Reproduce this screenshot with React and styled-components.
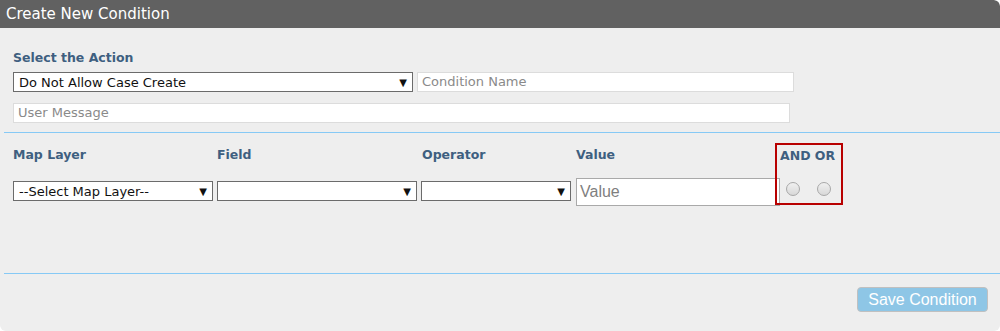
import React from 'react';
import styled, { createGlobalStyle } from 'styled-components';

const GlobalStyle = createGlobalStyle`
    html, body {
        margin: 0;
        padding: 0;
        background: #fff;
    }
`;

const Panel = styled.div`
    width: 1000px;
    height: 331px;
    background-color: #eeeeee;
    border-radius: 0 6px 6px 6px;
    font-family: "DejaVu Sans", Verdana, sans-serif;
    overflow: hidden;
    display: flex;
    flex-direction: column;
    text-align: left;
`;

const Header = styled.div`
    height: 28px;
    background-color: #616161;
    color: #fff;
    font-size: 15px;
    line-height: 29px;
    padding-left: 6px;
    border-radius: 0 6px 0 0;
`;

const Section = styled.div`
    padding: ${p => p.$pad || '0 0 0 13px'};
    display: flex;
    flex-direction: column;
`;

const Label = styled.div`
    color: #3e5f80;
    font-weight: bold;
    font-size: 12.5px;
    line-height: 15px;
    width: ${p => p.$w || 'auto'};
    flex: none;
`;

const Row = styled.div`
    display: flex;
    align-items: ${p => p.$align || 'center'};
    gap: ${p => p.$gap || '4px'};
    margin-top: ${p => p.$mt || '0'};
`;

const SelectBox = styled.div`
    box-sizing: border-box;
    width: ${p => p.$w};
    height: 20px;
    margin-top: ${p => p.$mt || '0'};
    margin-right: ${p => p.$mr || '0'};
    background: #fff;
    border: 1px solid #6b6b6b;
    display: flex;
    align-items: center;
    justify-content: space-between;
    padding: 0 5px 0 5px;
    font-size: 13px;
    color: #111;
    flex: none;

    span.arrow {
        font-size: 10px;
        color: #111;
    }
`;

const TextInput = styled.div`
    box-sizing: border-box;
    width: ${p => p.$w};
    height: 20px;
    background: #fff;
    border: 1px solid #dcdcdc;
    padding-left: 4px;
    font-size: 13px;
    line-height: 18px;
    color: #8a8a8a;
    flex: none;
`;

const Divider = styled.div`
    height: 1px;
    background: #86c9f5;
    margin: ${p => p.$m || '0'};
`;

const ValueInput = styled.div`
    box-sizing: border-box;
    width: 204px;
    height: 28px;
    background: #fff;
    border: 1px solid #a9a9a9;
    padding-left: 3px;
    font-family: "Liberation Sans", Arial, sans-serif;
    font-size: 16px;
    line-height: 26px;
    color: #7f7f7f;
    flex: none;
`;

const LogicBox = styled.div`
    box-sizing: border-box;
    width: 68px;
    height: 62px;
    border: 2px solid #b80000;
    margin-left: -5px;
    margin-top: -35px;
    padding: 3px 0 0 3px;
    display: flex;
    flex-direction: column;
    flex: none;
`;

const Radios = styled.div`
    display: flex;
    gap: 17px;
    margin: 19px 0 0 6px;
`;

const Radio = styled.div`
    width: 14px;
    height: 14px;
    border-radius: 50%;
    border: 1px solid #a8a8a8;
    background: linear-gradient(#f0f0f0, #d8d8d8);
    box-sizing: border-box;
`;

const Footer = styled.div`
    display: flex;
    justify-content: flex-end;
    padding: 13px 12px 0 0;
`;

const SaveButton = styled.button`
    width: 131px;
    height: 25px;
    background: #8ec6e6;
    border: 1px solid #c0c0c0;
    border-radius: 4px;
    color: #fff;
    font-family: "Liberation Sans", Arial, sans-serif;
    font-size: 16px;
    padding: 0;
`;

const Arrow = () => <span className="arrow">▼</span>;

const App = () => {
    return (
        <>
            <GlobalStyle />
            <Panel>
                <Header>Create New Condition</Header>

                <Section $pad="22px 0 0 13px">
                    <Label>Select the Action</Label>
                    <Row $mt="7px">
                        <SelectBox $w="400px">
                            <span>Do Not Allow Case Create</span>
                            <Arrow />
                        </SelectBox>
                        <TextInput $w="377px">Condition Name</TextInput>
                    </Row>
                    <Row $mt="11px">
                        <TextInput $w="777px">User Message</TextInput>
                    </Row>
                </Section>

                <Divider $m="9px 0 0 4px" />

                <Section $pad="14px 0 0 13px">
                    <Row $gap="0">
                        <Label $w="204px">Map Layer</Label>
                        <Label $w="205px">Field</Label>
                        <Label $w="154px">Operator</Label>
                        <Label $w="204px">Value</Label>
                    </Row>
                    <Row $mt="16px" $gap="0" $align="flex-start">
                        <SelectBox $w="200px" $mt="3px" $mr="4px">
                            <span>--Select Map Layer--</span>
                            <Arrow />
                        </SelectBox>
                        <SelectBox $w="200px" $mt="3px" $mr="4px">
                            <span />
                            <Arrow />
                        </SelectBox>
                        <SelectBox $w="150px" $mt="3px" $mr="5px">
                            <span />
                            <Arrow />
                        </SelectBox>
                        <ValueInput>Value</ValueInput>
                        <LogicBox>
                            <Label>AND OR</Label>
                            <Radios>
                                <Radio />
                                <Radio />
                            </Radios>
                        </LogicBox>
                    </Row>
                </Section>

                <Divider $m="67px 0 0 4px" />

                <Footer>
                    <SaveButton>Save Condition</SaveButton>
                </Footer>
            </Panel>
        </>
    );
};

export default App;
